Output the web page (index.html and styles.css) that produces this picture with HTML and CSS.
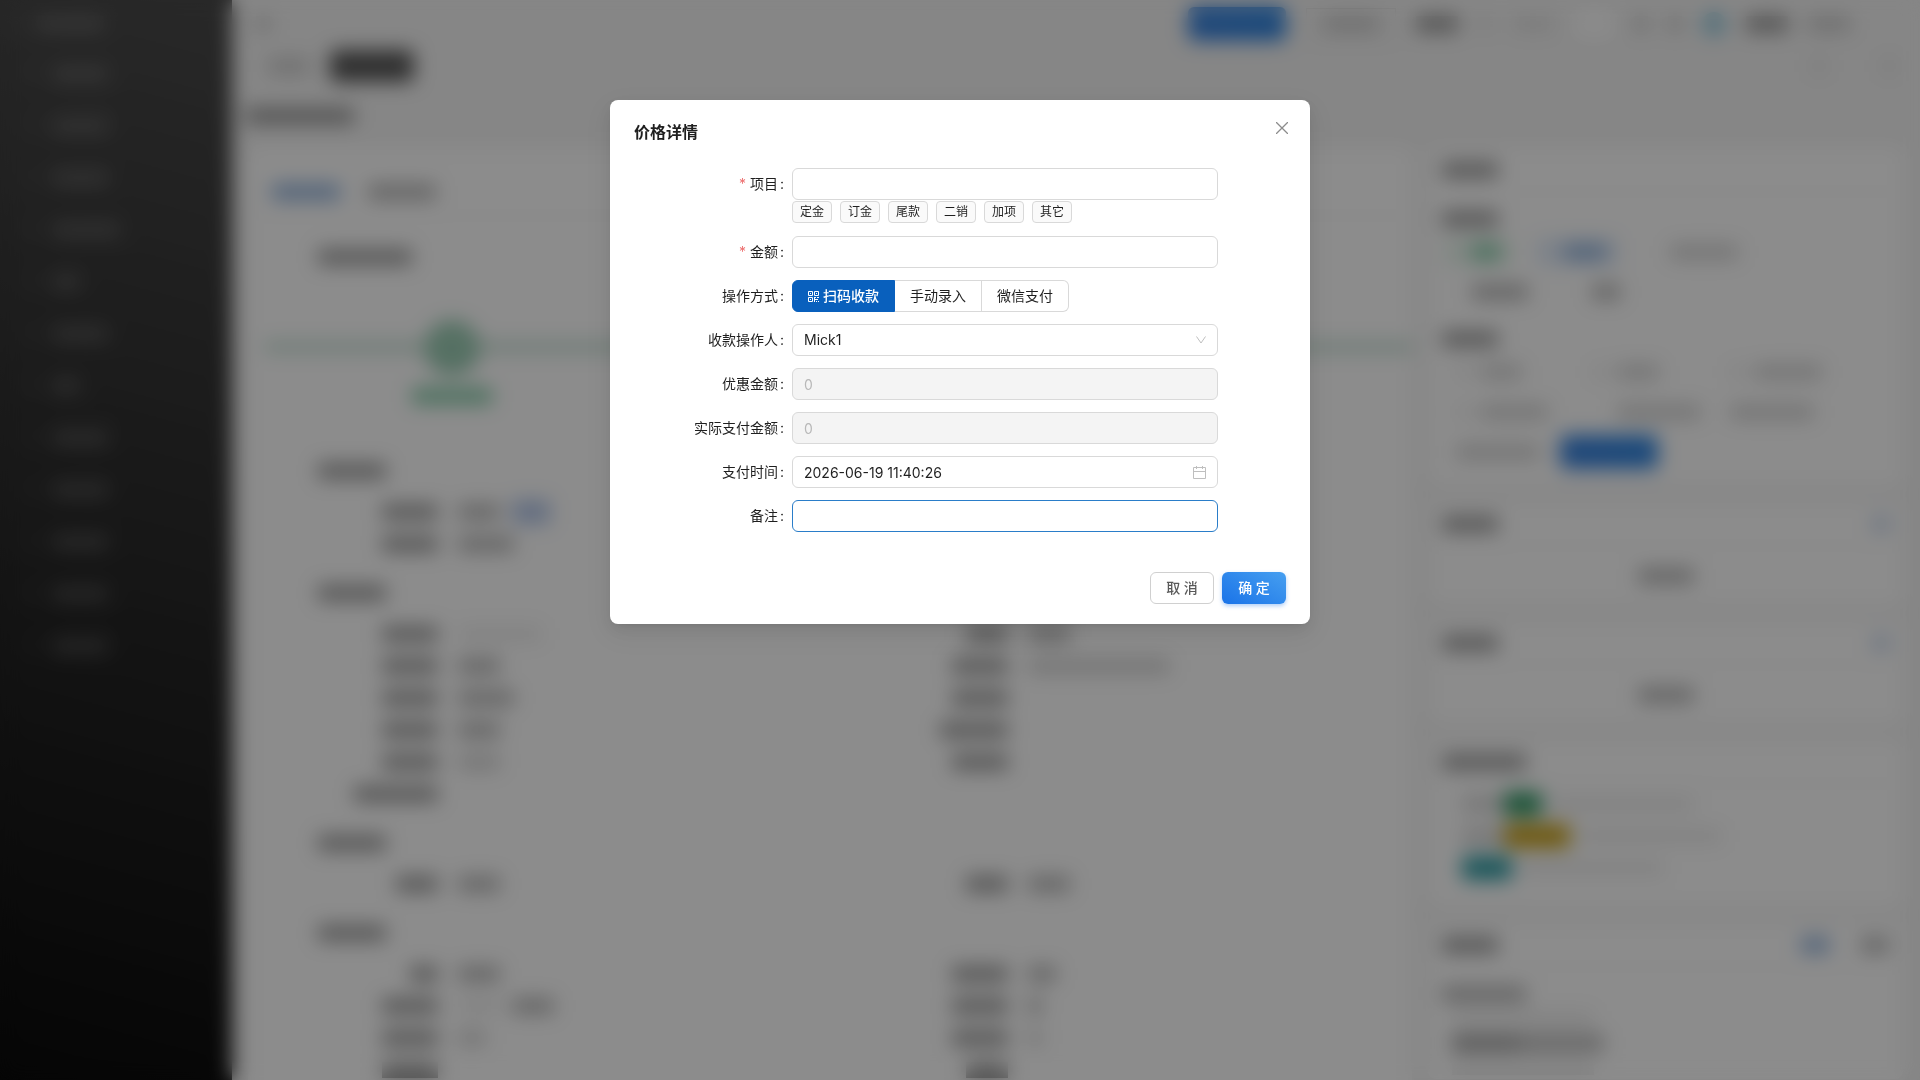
FILE: index.html
```html
<!DOCTYPE html>
<html lang="zh-CN">
<head>
  <meta charset="UTF-8" />
  <meta name="viewport" content="width=device-width, initial-scale=1.0"/>
  <title>价格详情</title>
  <link rel="stylesheet" href="styles.css">
</head>
<body>
  <!-- page behind the dialog -->
  <div class="page" aria-hidden="true">
    <aside class="sidebar">
      <div class="logo"><i class="dot"></i><i class="bar w5"></i></div>
      <div class="menu-item"><i class="dot"></i><i class="bar w4"></i></div>
      <div class="menu-item"><i class="dot"></i><i class="bar w4"></i></div>
      <div class="menu-item"><i class="dot"></i><i class="bar w4"></i></div>
      <div class="menu-item"><i class="dot"></i><i class="bar w5"></i></div>
      <div class="menu-item"><i class="dot"></i><i class="bar w2"></i></div>
      <div class="menu-item"><i class="dot"></i><i class="bar w4"></i></div>
      <div class="menu-item"><i class="dot"></i><i class="bar w2"></i></div>
      <div class="menu-item"><i class="dot"></i><i class="bar w4"></i></div>
      <div class="menu-item"><i class="dot"></i><i class="bar w4"></i></div>
      <div class="menu-item"><i class="dot"></i><i class="bar w4"></i></div>
      <div class="menu-item"><i class="dot"></i><i class="bar w4"></i></div>
      <div class="menu-item"><i class="dot"></i><i class="bar w4"></i></div>
    </aside>

    <div class="main">
      <div class="topbar">
        <i class="bar w1 light"></i>
        <div class="topbar-right">
          <i class="solid-button"></i>
          <i class="ghost-button"><i class="bar w4 light"></i></i>
          <i class="bar w3 strong"></i>
          <i class="bar w1 faint"></i>
          <i class="bar w3 faint"></i>
          <i class="switch"></i>
          <i class="bar w1 light"></i>
          <i class="bar w1 light"></i>
          <i class="avatar"></i>
          <i class="bar w3 strong"></i>
          <i class="bar w3 light"></i>
        </div>
      </div>
      <div class="tabs-row">
        <i class="bar w3 light"></i>
        <i class="active-tab"></i>
        <div class="tabs-tools"><i class="bar w1 faint"></i><i class="bar w1 faint"></i></div>
      </div>
      <div class="page-title"><i class="bar w8 strong"></i></div>

      <div class="columns">
        <div class="card detail">
          <div class="card-tabs">
            <i class="bar w5 blue"></i>
            <i class="bar w5"></i>
          </div>
          <div class="section-title"><i class="bar w7 strong"></i></div>
          <div class="steps">
            <i class="step-circle"></i>
            <i class="bar w5 green"></i>
          </div>
          <div class="section-title"><i class="bar w5 strong"></i></div>
          <div class="info">
            <div class="info-row"><span><i class="bar w4 strong"></i></span><span><i class="bar w3"></i><i class="tag-blue"></i></span></div>
            <div class="info-row"><span><i class="bar w4 strong"></i></span><span><i class="bar w4"></i></span></div>
          </div>
          <div class="section-title"><i class="bar w5 strong"></i></div>
          <div class="info">
            <div class="info-row"><span><i class="bar w4 strong"></i></span><span><i class="bar w6 faint"></i></span><span><i class="bar w3 strong"></i></span><span><i class="bar w3"></i></span></div>
            <div class="info-row"><span><i class="bar w4 strong"></i></span><span><i class="bar w3"></i></span><span><i class="bar w4 strong"></i></span><span><i class="bar w10 light"></i></span></div>
            <div class="info-row"><span><i class="bar w4 strong"></i></span><span><i class="bar w4"></i></span><span><i class="bar w4 strong"></i></span><span></span></div>
            <div class="info-row"><span><i class="bar w4 strong"></i></span><span><i class="bar w3"></i></span><span><i class="bar w5 strong"></i></span><span></span></div>
            <div class="info-row"><span><i class="bar w4 strong"></i></span><span><i class="bar w3 light"></i></span><span><i class="bar w4 strong"></i></span><span></span></div>
            <div class="info-row"><span><i class="bar w6 strong"></i></span><span></span></div>
          </div>
          <div class="section-title"><i class="bar w5 strong"></i></div>
          <div class="info">
            <div class="info-row"><span><i class="bar w3 strong"></i></span><span><i class="bar w3"></i></span><span><i class="bar w3 strong"></i></span><span><i class="bar w3"></i></span></div>
          </div>
          <div class="section-title"><i class="bar w5 strong"></i></div>
          <div class="info">
            <div class="info-row"><span><i class="bar w2 strong"></i></span><span><i class="bar w3"></i></span><span><i class="bar w4 strong"></i></span><span><i class="bar w2"></i></span></div>
            <div class="info-row"><span><i class="bar w4 strong"></i></span><span><i class="bar w3 faint"></i><i class="bar w3"></i></span><span><i class="bar w4 strong"></i></span><span><i class="bar w1"></i></span></div>
            <div class="info-row"><span><i class="bar w4 strong"></i></span><span><i class="bar w2 light"></i></span><span><i class="bar w4 strong"></i></span><span><i class="bar w1 light"></i></span></div>
            <div class="info-row"><span><i class="bar w4 strong"></i></span><span></span><span><i class="bar w3 strong"></i></span><span></span></div>
          </div>
        </div>

        <div class="side">
          <div class="card">
            <div class="card-head"><i class="bar w4 strong"></i></div>
            <div class="sub-title"><i class="bar w4 strong"></i></div>
            <div class="pills">
              <i class="pill pill-green"><i class="bar w2 green"></i></i>
              <i class="pill pill-blue"><i class="bar w3 blue"></i></i>
              <i class="pill"><i class="bar w5 light"></i></i>
            </div>
            <div class="pills">
              <i class="pill"><i class="bar w4"></i></i>
              <i class="pill"><i class="bar w2"></i></i>
            </div>
            <div class="sub-title"><i class="bar w4 strong"></i></div>
            <div class="options">
              <i><i class="bar w1 faint"></i><i class="bar w3 light"></i></i>
              <i><i class="bar w1 faint"></i><i class="bar w3 light"></i></i>
              <i><i class="bar w1 faint"></i><i class="bar w5 light"></i></i>
              <i><i class="bar w1 faint"></i><i class="bar w5 light"></i></i>
              <i><i class="bar w1 none"></i><i class="bar w6 light"></i></i>
              <i><i class="bar w6 light"></i></i>
              <i class="options-last"><i class="bar w6 light"></i><i class="solid-button"></i></i>
            </div>
          </div>
          <div class="card empty">
            <div class="card-head"><i class="bar w4 strong"></i><i class="plus"></i></div>
            <div class="empty-text"><i class="bar w4"></i></div>
          </div>
          <div class="card empty">
            <div class="card-head"><i class="bar w4 strong"></i><i class="plus"></i></div>
            <div class="empty-text"><i class="bar w4"></i></div>
          </div>
          <div class="card logs">
            <div class="card-head"><i class="bar w6 strong"></i></div>
            <div class="log"><i class="bar w3 light"></i><i class="badge badge-green"></i><i class="bar w10 faint"></i></div>
            <div class="log"><i class="bar w3 light"></i><i class="badge badge-gold"></i><i class="bar w10 faint"></i></div>
            <div class="log"><i class="badge badge-teal"></i><i class="bar w10 faint"></i></div>
          </div>
          <div class="card follow">
            <div class="card-head"><i class="bar w4 strong"></i><div class="head-tabs"><i class="bar w2 blue"></i><i class="bar w2"></i></div></div>
            <div class="sub-title"><i class="bar w6"></i></div>
            <div class="note"><i class="bar w10 faint"></i></div>
            <div class="note"><i class="bar w5 strong"></i><i class="bar w6"></i></div>
            <div class="note"><i class="bar w10 faint"></i></div>
          </div>
        </div>
      </div>
    </div>
  </div>

  <div class="mask">
    <div class="modal" role="dialog" aria-labelledby="modal-title">
      <h1 class="modal-title" id="modal-title">价格详情</h1>
      <button class="close" type="button" aria-label="关闭">
        <svg width="12" height="12" viewBox="0 0 12 12" fill="none" stroke="currentColor" stroke-width="1.3"><path d="M0 0 12 12M12 0 0 12"/></svg>
      </button>

      <form class="form">
        <div class="form-row">
          <label class="required" for="item">项目</label>
          <div>
            <input class="input" type="text" id="item">
            <div class="quick-tags">
              <button type="button">定金</button>
              <button type="button">订金</button>
              <button type="button">尾款</button>
              <button type="button">二销</button>
              <button type="button">加项</button>
              <button type="button">其它</button>
            </div>
          </div>
        </div>
        <div class="form-row">
          <label class="required" for="amount">金额</label>
          <input class="input" type="text" id="amount">
        </div>
        <div class="form-row" role="radiogroup" aria-labelledby="mode-label">
          <span class="label" id="mode-label">操作方式</span>
          <div class="radio-group">
            <label><input type="radio" name="mode" checked>
              <svg width="11" height="11" viewBox="0 0 11 11" fill="none" stroke="currentColor"><path d="M.5.5h4v4h-4zM6.5.5h4v4h-4zM.5 6.5h4v4h-4z"/><path d="M2 2.5h1M8 2.5h1M2 8.5h1M6 6.5h2M9 6.5h2M6.5 7v4M7 8.5h2M9.5 8v1M8 10.5h1M10 10.5h1"/></svg>
              扫码收款</label>
            <label><input type="radio" name="mode">手动录入</label>
            <label><input type="radio" name="mode">微信支付</label>
          </div>
        </div>
        <div class="form-row">
          <label for="operator">收款操作人</label>
          <div class="with-icon">
            <select class="input" id="operator"><option>Mick1</option></select>
            <svg class="chevron" width="10" height="8" viewBox="0 0 10 8" fill="none" stroke="currentColor"><path d="M0.5 0.5 5 7 9.5 0.5"/></svg>
          </div>
        </div>
        <div class="form-row">
          <label for="discount">优惠金额</label>
          <input class="input" type="text" id="discount" value="0" disabled>
        </div>
        <div class="form-row">
          <label for="actual">实际支付金额</label>
          <input class="input" type="text" id="actual" value="0" disabled>
        </div>
        <div class="form-row">
          <label for="pay-time">支付时间</label>
          <div class="with-icon">
            <input class="input" type="text" id="pay-time" value="2026-06-19 11:40:26">
            <svg width="13" height="13" viewBox="0 0 13 13" fill="none" stroke="currentColor"><path d="M.5 1.5h12v11H.5zM.5 5.5h12M3.5 0v3M9.5 0v3"/></svg>
          </div>
        </div>
        <div class="form-row">
          <label for="remark">备注</label>
          <input class="input active" type="text" id="remark">
        </div>
        <div class="footer">
          <button class="button" type="button">取 消</button>
          <button class="button primary" type="submit">确 定</button>
        </div>
      </form>
    </div>
  </div>
</body>
</html>
```
FILE: styles.css
```css
* {
  box-sizing: border-box;
}

body {
  margin: 0;
  height: 100vh;
  overflow: hidden;
  font-family: Inter, "Noto Sans CJK SC", sans-serif;
  font-size: 14px;
  line-height: 22px;
  color: rgba(0, 0, 0, 0.88);
  background-color: #f4f4f4;
}

button, input, select {
  font: inherit;
  color: inherit;
}

/* ---------- page behind the dialog ---------- */
.page {
  display: flex;
  height: 100vh;
  overflow: hidden;
}

.bar {
  flex: none;
  height: 16px;
  background-color: rgba(0, 0, 0, 0.28);
}

.w1 { width: 14px; }
.w2 { width: 28px; }
.w3 { width: 42px; }
.w4 { width: 56px; }
.w5 { width: 68px; }
.w6 { width: 84px; }
.w7 { width: 94px; }
.w8 { width: 108px; }
.w10 { width: 142px; }

.strong { background-color: rgba(0, 0, 0, 0.38); }
.light { background-color: rgba(0, 0, 0, 0.16); }
.faint { background-color: rgba(0, 0, 0, 0.07); }
.none { background-color: transparent; }
.blue { background-color: #93b4dd; }
.green { background-color: #84cba8; }

.sidebar {
  flex: none;
  width: 232px;
  background: linear-gradient(195deg, #4a4a4a, #0a0a0a);
}

.sidebar .bar {
  background-color: rgba(255, 255, 255, 0.16);
}

.dot {
  width: 14px;
  height: 14px;
  background-color: rgba(255, 255, 255, 0.05);
}

.logo, .menu-item {
  display: flex;
  align-items: center;
  gap: 14px;
  height: 52px;
  padding-left: 24px;
}

.logo {
  height: 48px;
  gap: 8px;
  padding-left: 14px;
}

.main {
  flex: 1;
  min-width: 0;
}

.topbar, .tabs-row, .page-title, .topbar-right, .tabs-tools {
  display: flex;
  align-items: center;
}

.topbar {
  justify-content: space-between;
  height: 48px;
  padding: 0 70px 0 24px;
}

.topbar-right {
  gap: 20px;
}

.solid-button {
  width: 98px;
  height: 34px;
  border-radius: 6px;
  background: linear-gradient(40deg, #3c82dc, #2f86e0);
}

.ghost-button {
  display: flex;
  align-items: center;
  height: 32px;
  padding: 0 16px;
  border: 1px solid #ccc;
}

.switch {
  width: 40px;
  height: 24px;
  border-radius: 12px;
  background-color: #fff;
}

.avatar {
  width: 24px;
  height: 24px;
  border-radius: 50%;
  background-color: #94cbe0;
}

.tabs-row {
  gap: 20px;
  height: 36px;
  padding: 0 24px 0 36px;
}

.active-tab {
  width: 84px;
  height: 32px;
  border-radius: 6px;
  background-color: #585858;
}

.tabs-tools {
  gap: 56px;
  margin-left: auto;
}

.page-title {
  height: 64px;
  padding-left: 14px;
}

.columns {
  display: grid;
  grid-template-columns: 1fr 475px;
  gap: 16px;
  padding: 0 17px 0 16px;
}

.card {
  background-color: #fff;
  border-radius: 8px;
}

.card-tabs {
  display: flex;
  align-items: center;
  gap: 28px;
  height: 68px;
  padding: 20px 24px 0;
  border-bottom: 1px solid #f0f0f0;
}

.section-title {
  display: flex;
  align-items: center;
  height: 50px;
  margin-top: 8px;
  padding-left: 70px;
}

.card-tabs + .section-title {
  margin-top: 16px;
}

.steps {
  display: flex;
  flex-direction: column;
  gap: 12px;
  height: 156px;
  padding: 38px 0 0 164px;
  background: linear-gradient(#c4dfd3, #c4dfd3) 16px 60px / 100% 10px no-repeat;
}

.step-circle {
  width: 56px;
  height: 56px;
  margin-left: 12px;
  border-radius: 50%;
  background-color: #9ccdb5;
}

.steps .bar {
  width: 80px;
}

.info-row {
  display: grid;
  grid-template-columns: 190px 1fr 144px 384px;
  column-gap: 20px;
  align-items: center;
  height: 32px;
}

.info-row span {
  display: flex;
  align-items: center;
  gap: 12px;
}

.info-row span:nth-child(odd) {
  justify-content: flex-end;
}

.tag-blue {
  width: 38px;
  height: 24px;
  background-color: #b5c8ea;
}

.side {
  display: flex;
  flex-direction: column;
  gap: 16px;
}

.card-head {
  display: flex;
  align-items: center;
  justify-content: space-between;
  height: 44px;
  padding: 0 14px;
  border-bottom: 1px solid #f0f0f0;
}

.sub-title {
  display: flex;
  align-items: center;
  height: 40px;
  padding: 14px 0 0 14px;
}

.pills {
  display: flex;
  align-items: center;
  gap: 24px;
  height: 40px;
  padding: 0 16px;
}

.pill {
  display: flex;
  align-items: center;
  height: 28px;
  padding: 0 12px 0 28px;
}

.pill-green { background-color: #e9f6ee; }
.pill-blue { background-color: #e3edfa; }

.options {
  display: grid;
  grid-template-columns: 1fr 1fr 1fr;
  grid-auto-rows: 40px;
  padding: 0 36px 14px 28px;
}

.options > i {
  display: flex;
  align-items: center;
  gap: 10px;
}

.options .options-last {
  grid-column: 1 / -1;
  gap: 20px;
}

.plus {
  width: 16px;
  height: 16px;
  background-color: #c3d3ea;
}

.empty-text {
  display: flex;
  align-items: center;
  justify-content: center;
  height: 59px;
}

.logs {
  height: 167px;
}

.logs .card-head {
  margin-bottom: 4px;
}

.log {
  display: flex;
  align-items: center;
  height: 32px;
  padding-left: 34px;
}

.log .faint {
  margin-left: 10px;
}

.badge {
  height: 24px;
  border-radius: 4px;
}

.badge-green { width: 38px; background-color: #2f9763; }
.badge-gold { width: 66px; background-color: #c9a21b; }
.badge-teal { width: 50px; background-color: #2f9da5; }

.head-tabs {
  display: flex;
  gap: 32px;
}

.note {
  display: flex;
  align-items: center;
  height: 24px;
  padding-left: 24px;
}

/* ---------- dialog ---------- */
.mask {
  position: fixed;
  inset: 0;
  padding-top: 100px;
  background-color: rgba(0, 0, 0, 0.45);
  backdrop-filter: blur(10px);
}

.modal {
  position: relative;
  width: 700px;
  max-width: 100%;
  margin: 0 auto;
  padding: 20px 24px;
  border-radius: 8px;
  background-color: #fff;
  box-shadow: 0 6px 16px rgba(0, 0, 0, 0.08), 0 3px 6px -4px rgba(0, 0, 0, 0.12), 0 9px 28px 8px rgba(0, 0, 0, 0.05);
}

.modal-title {
  margin: 0 0 24px;
  font-size: 16px;
  font-weight: 600;
  line-height: 24px;
}

.close {
  position: absolute;
  top: 16px;
  right: 16px;
  display: grid;
  place-items: center;
  width: 24px;
  height: 24px;
  padding: 0;
  border: none;
  background: none;
  color: #8c8c8c;
  cursor: pointer;
}

.form {
  display: flex;
  flex-direction: column;
  gap: 12px;
}

.form-row {
  display: grid;
  grid-template-columns: 150px 1fr;
  column-gap: 8px;
  padding-right: 68px;
}

.form-row > label, .label {
  line-height: 32px;
  text-align: right;
}

.form-row > label::after, .label::after {
  content: ":";
  margin-left: 2px;
}

.form-row > .required::before {
  content: "*";
  margin-right: 4px;
  color: #ed6f6f;
}

.input {
  display: block;
  width: 100%;
  height: 32px;
  padding: 4px 11px;
  border: 1px solid #d9d9d9;
  border-radius: 6px;
  background-color: #fff;
  outline: none;
  appearance: none;
}

.input:disabled {
  color: #b8b8b8;
  background-color: #f4f4f4;
}

.input.active, .input:focus {
  border-color: #2a7dc9;
}

.with-icon {
  display: grid;
  align-items: center;
}

.with-icon > * {
  grid-area: 1 / 1;
}

.with-icon svg {
  justify-self: end;
  margin-right: 12px;
  color: #bfbfbf;
  pointer-events: none;
}

.quick-tags {
  display: flex;
  gap: 8px;
  height: 24px;
  padding: 1px 0;
}

.quick-tags button {
  padding: 0 7px;
  border: 1px solid #d9d9d9;
  border-radius: 4px;
  background-color: #fafafa;
  font-size: 12px;
  line-height: 20px;
  cursor: pointer;
}

.radio-group {
  display: flex;
}

.radio-group label {
  display: flex;
  align-items: center;
  gap: 4px;
  height: 32px;
  padding: 0 15px;
  border: 1px solid #d9d9d9;
  border-left: none;
  cursor: pointer;
}

.radio-group label:first-child {
  border-left: 1px solid #d9d9d9;
  border-radius: 6px 0 0 6px;
}

.radio-group label:last-child {
  border-radius: 0 6px 6px 0;
}

.radio-group label:has(input:checked) {
  border-color: #0960bd;
  background-color: #0960bd;
  color: #fff;
  font-weight: 500;
}

.radio-group input {
  position: absolute;
  opacity: 0;
  pointer-events: none;
}

.footer {
  display: flex;
  justify-content: flex-end;
  gap: 8px;
  margin-top: 28px;
}

.button {
  min-width: 64px;
  height: 32px;
  padding: 0 15px;
  border: 1px solid #d0d0d0;
  border-radius: 6px;
  background-color: #fff;
  color: #595959;
  font-weight: 500;
  cursor: pointer;
}

.button.primary {
  border-color: transparent;
  background: linear-gradient(30deg, #1a73e8, #469ff0) border-box;
  color: #fff;
  box-shadow: 0 2px 4px rgba(26, 115, 232, 0.35);
}
```
